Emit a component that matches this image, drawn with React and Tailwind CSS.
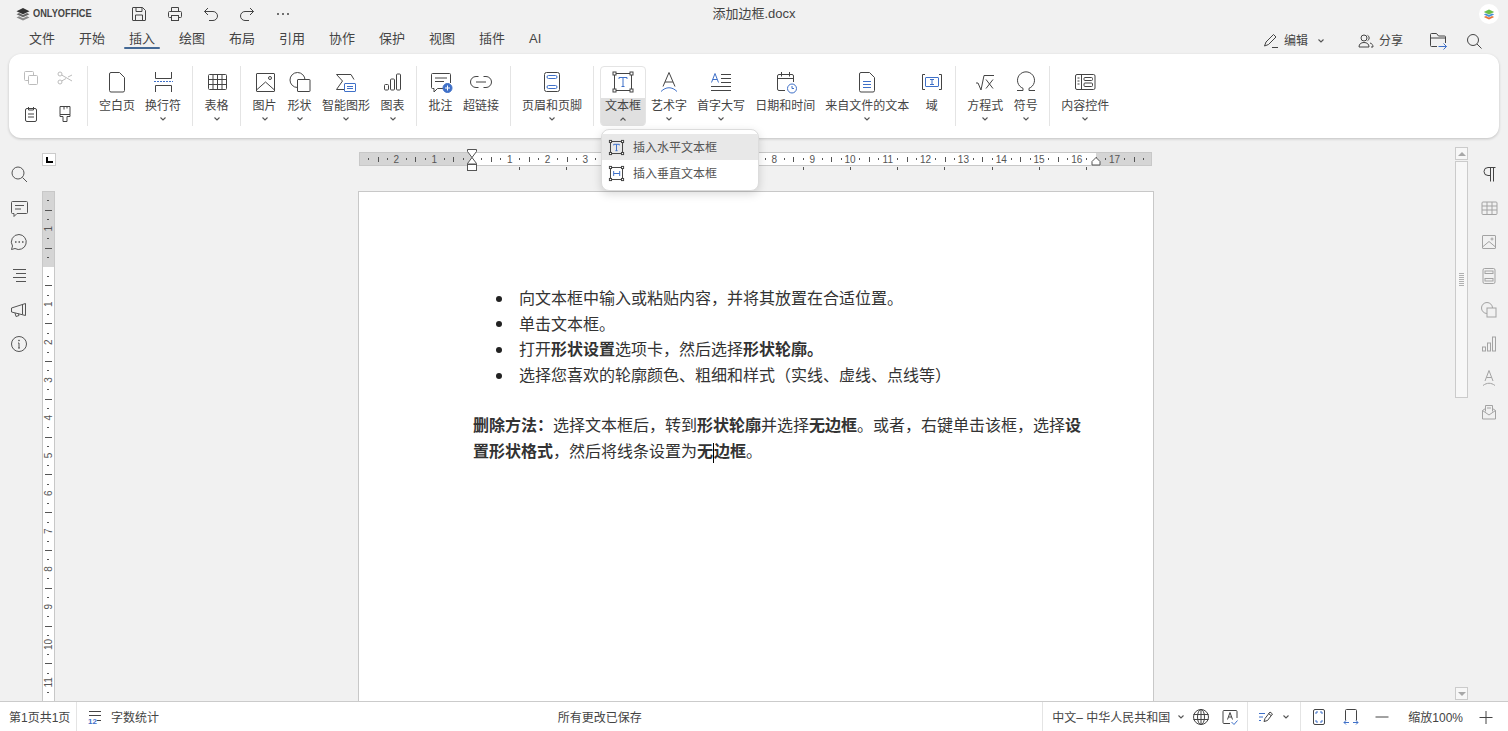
import React from 'react'

const BLUE = '#3f70c8'
const INK = '#444444'

const S = ({ w = 24, h = 24, c = INK, children }) => (
    <svg width={w} height={h} viewBox={`0 0 ${w} ${h}`} fill="none" stroke={c} strokeWidth="1" className="block shrink-0">
        {children}
    </svg>
)

const Chevron = ({ up }) => (
    <svg width="10" height="6" viewBox="0 0 10 6" fill="none" stroke="#555" strokeWidth="1.1" className="block shrink-0">
        <path d={up ? 'M2.5 4.5 5 2l2.5 2.5' : 'M2.5 1.5 5 4l2.5-2.5'} />
    </svg>
)

const TextBoxIcon = ({ vertical, size = 24 }) => (
    <svg width={size} height={size} viewBox="0 0 24 24" fill="none" stroke={INK} strokeWidth={size < 24 ? 1.4 : 1} className="block shrink-0">
        <rect x="3.5" y="3.5" width="17" height="17" />
        {[[2, 2], [19, 2], [2, 19], [19, 19]].map(([x, y]) => (
            <rect key={x + '-' + y} x={x} y={y} width="3" height="3" fill="#fff" />
        ))}
        {vertical ? (
            <path stroke={BLUE} d="M8 8.5v7M8 12h8.5M16.5 8.5v7" />
        ) : (
            <path stroke={BLUE} d="M8 9V7.5h8V9M12 7.5v9M10.5 16.5h3" />
        )}
    </svg>
)

const PageIcon = ({ lines }) => (
    <S>
        <path d="M6 2.5h8.5l5 5v13a1.5 1.5 0 0 1-1.5 1.5H6a1.5 1.5 0 0 1-1.5-1.5V4A1.5 1.5 0 0 1 6 2.5z" />
        {lines && <path stroke={BLUE} d="M8 11.5h8M8 14.5h8M8 17.5h8" />}
    </S>
)

const icons = {
    page: <PageIcon />,
    pageBreak: (
        <S>
            <path d="M4.5 2v6.5h16V2M4.5 22v-6.5h16V22" />
            <path stroke={BLUE} strokeDasharray="2 1" d="M3 11.5h19" />
        </S>
    ),
    table: (
        <S>
            <rect x="3.5" y="4.5" width="18" height="15" rx="1" />
            <path d="M3.5 9.5h18M3.5 14.5h18M8 4.5v15M12.5 4.5v15M17 4.5v15" />
        </S>
    ),
    image: (
        <S>
            <rect x="3.5" y="3.5" width="18" height="18" rx="0.5" />
            <path d="M3.5 20 12.5 12l9 8" />
            <circle cx="17" cy="8" r="1.5" />
        </S>
    ),
    shape: (
        <S>
            <circle cx="9.5" cy="10" r="7.5" />
            <rect x="9.5" y="9.5" width="12.5" height="12" rx="0.5" fill="#fff" />
        </S>
    ),
    smart: (
        <S>
            <path d="M20 9.5 17 4.5H2.5L8.5 11l-6 8.5H10" />
            <rect x="10.5" y="13.5" width="11" height="8" rx="0.5" stroke={BLUE} />
            <path stroke={BLUE} d="M13 16.5h6M13 18.5h6" />
        </S>
    ),
    chart: (
        <S>
            <rect x="3.5" y="14.5" width="4" height="5.5" rx="1" />
            <rect x="9.5" y="9" width="4" height="11" rx="1" />
            <rect x="15.5" y="4" width="4" height="16" rx="1" />
        </S>
    ),
    comment: (
        <S>
            <path d="M15 18.5H8.5L5 22v-3.5H3.5a1 1 0 0 1-1-1v-13a1 1 0 0 1 1-1h17a1 1 0 0 1 1 1V13" />
            <path d="M6 8h12M6 11.5h9" />
            <circle cx="18.5" cy="18" r="4.5" fill={BLUE} stroke={BLUE} />
            <path stroke="#fff" d="M16 18h5M18.5 15.5v5" />
        </S>
    ),
    link: (
        <S>
            <path d="M9.5 6.5H7a5.5 5.5 0 0 0 0 11h2.5M14.5 6.5H17a5.5 5.5 0 0 1 0 11h-2.5M7 12h10" />
        </S>
    ),
    headerFooter: (
        <S>
            <rect x="4.5" y="2.5" width="15" height="19" rx="2" />
            <rect x="7" y="5.5" width="10" height="3" rx="1.5" stroke={BLUE} />
            <rect x="7" y="15.5" width="10" height="3" rx="1.5" stroke={BLUE} />
        </S>
    ),
    textBox: <TextBoxIcon />,
    art: (
        <S>
            <path d="M6 16.5 12 2.5l6 14M8 12h8" />
            <path stroke={BLUE} d="M4 21.5c5-5 11-5 16 0" />
        </S>
    ),
    dropCap: (
        <S>
            <path stroke={BLUE} d="M2.5 12.5 6 3.5l3.5 9M3.8 9.5h4.4" />
            <path d="M12 4.5h10M12 8.5h10M12 12.5h10M2 16.5h20M2 20.5h20" />
        </S>
    ),
    date: (
        <S>
            <path d="M12 20.5H6A1.5 1.5 0 0 1 4.5 19V6A1.5 1.5 0 0 1 6 4.5h13A1.5 1.5 0 0 1 20.5 6v6M4.5 8.5h16M8.5 2v4.5M16.5 2v4.5" />
            <circle cx="19" cy="18.5" r="4.5" stroke={BLUE} fill="#fff" />
            <path stroke={BLUE} d="M19 16v2.5h2" />
        </S>
    ),
    fileText: <PageIcon lines />,
    field: (
        <S>
            <path d="M5 4.5H2.5v15H5M19 4.5h2.5v15H19" />
            <rect x="5.5" y="7.5" width="13" height="9" rx="0.5" stroke={BLUE} />
            <path stroke={BLUE} d="M10 9.5h4M12 9.5v5M10 14.5h4" />
        </S>
    ),
    equation: (
        <S>
            <path d="M3 13h2l3 7 3-14.5h10M13 9.5l7 9M20 9.5l-7 9" />
        </S>
    ),
    omega: (
        <S>
            <path d="M3 20.5h6v-2.200a8.500 8.500 0 1 1 6 0v2.200h6" />
        </S>
    ),
    control: (
        <S>
            <rect x="2.5" y="4.5" width="19.5" height="15" rx="1.5" />
            <path d="M8.5 4.5v15M4.5 8h2M4.5 11h2M4.5 14h2" />
            <rect x="11" y="7.5" width="8.5" height="3" rx="1" />
            <rect x="11" y="13" width="8.5" height="3.5" rx="1" />
        </S>
    ),
}

const Tool = ({ icon, label, arrow, open }) => (
    <div className={`flex h-[60px] min-w-[35px] flex-col items-center rounded-[4px] ${open ? 'border border-[#e4e4e4]' : ''}`}>
        <div className={`flex h-[32px] items-center justify-center ${open ? '-mt-px' : ''}`}>{icon}</div>
        <div className={`flex w-full flex-1 flex-col items-center px-[5px] pt-px ${open ? '-mx-px -mb-px w-[46px] rounded-b-[4px] bg-[#e0e0e0]' : ''}`}>
            <span className="whitespace-nowrap text-[12px] leading-[15px] text-[#444]">{label}</span>
            {arrow && <div className="mt-[2px]"><Chevron up={open} /></div>}
        </div>
    </div>
)

const Sep = () => <div className="mx-[6px] h-[60px] w-px shrink-0 bg-[#e4e4e4]" />

const Ribbon = () => (
    <div className="mx-[9px] flex h-[84px] shrink-0 items-start rounded-[12px] bg-white pl-[5px] pt-[12px] shadow-[0_1px_3px_rgba(0,0,0,0.2)]">
        <div className="-mr-px grid h-[60px] grid-cols-[34px_34px] grid-rows-[24px_24px] place-items-center gap-y-[12px]">
            <S w={16} h={16} c="#bcbcbc">
                <rect x="1.5" y="1.5" width="9" height="9" rx="1" />
                <rect x="5.5" y="5.5" width="9" height="9" rx="1" fill="#fff" />
            </S>
            <S w={16} h={16} c="#bcbcbc">
                <circle cx="3" cy="4" r="2" />
                <circle cx="3" cy="12" r="2" />
                <path d="M4.7 5 15 11M4.7 11 9 8.5M11 7l4-2" />
            </S>
            <S w={16} h={16}>
                <rect x="2.5" y="2.5" width="11" height="13" rx="1.5" />
                <path d="M5.5 1v3h5V1M5 8h6M5 11h6" />
            </S>
            <S w={16} h={16}>
                <path d="M3 .5h10v8H3zM3 8.5v2h3v5h4v-5h3v-2M7 .5v3M10 .5v2" />
            </S>
        </div>
        <Sep />
        <Tool icon={icons.page} label="空白页" />
        <Tool icon={icons.pageBreak} label="换行符" arrow />
        <Sep />
        <Tool icon={icons.table} label="表格" arrow />
        <Sep />
        <Tool icon={icons.image} label="图片" arrow />
        <Tool icon={icons.shape} label="形状" arrow />
        <Tool icon={icons.smart} label="智能图形" arrow />
        <Tool icon={icons.chart} label="图表" arrow />
        <Sep />
        <Tool icon={icons.comment} label="批注" />
        <Tool icon={icons.link} label="超链接" />
        <Sep />
        <Tool icon={icons.headerFooter} label="页眉和页脚" arrow />
        <Sep />
        <Tool icon={icons.textBox} label="文本框" arrow open />
        <Tool icon={icons.art} label="艺术字" arrow />
        <Tool icon={icons.dropCap} label="首字大写" arrow />
        <Tool icon={icons.date} label="日期和时间" />
        <Tool icon={icons.fileText} label="来自文件的文本" arrow />
        <Tool icon={icons.field} label="域" />
        <Sep />
        <Tool icon={icons.equation} label="方程式" arrow />
        <Tool icon={icons.omega} label="符号" arrow />
        <Sep />
        <Tool icon={icons.control} label="内容控件" arrow />
    </div>
)

const TitleBar = () => (
    <div className="grid h-[27px] shrink-0 grid-cols-[1fr_auto_1fr] items-center">
        <div className="flex items-center pl-[16px]">
            <S w={14} h={14} c="none">
                <path fill="#8a8a8a" d="M7 13.5.5 10.5 3 9.300 7 11.200l4-1.900 2.500 1.200z" />
                <path fill="#666" d="M7 10.300.5 7.300 3 6.100 7 8l4-1.900 2.500 1.200z" />
                <path fill="#333" d="M7 7.200.5 4.200 7 1l6.500 3.200z" />
            </S>
            <span className="ml-[3px] w-[60px] origin-left scale-x-[0.88] whitespace-nowrap text-[10.5px] font-bold leading-none text-[#444]">ONLYOFFICE</span>
            <div className="ml-[28px] flex">
                <div className="flex w-[36px] justify-center">
                    <S w={16} h={16}>
                        <path d="M2 1.500h9.500l3 3V14a.5.5 0 0 1-.5.5H2a.5.5 0 0 1-.5-.5V2a.5.5 0 0 1 .5-.5zM5 1.500v4h6v-4M4.500 14.500V9h7v5.500" />
                    </S>
                </div>
                <div className="flex w-[36px] justify-center">
                    <S w={16} h={16}>
                        <path d="M4.500 11.500h-2a1 1 0 0 1-1-1v-4a1 1 0 0 1 1-1h11a1 1 0 0 1 1 1v4a1 1 0 0 1-1 1h-2M4.500 5.500v-4h7v4" />
                        <rect x="4.5" y="9.5" width="7" height="5" />
                    </S>
                </div>
                <div className="flex w-[36px] justify-center">
                    <S w={16} h={16}>
                        <path d="M5 2 1.500 5.500 5 9M1.500 5.500H10a4.500 4.500 0 0 1 0 9H6" />
                    </S>
                </div>
                <div className="flex w-[36px] justify-center">
                    <S w={16} h={16}>
                        <path d="M11 2l3.500 3.500L11 9M14.500 5.500H6a4.500 4.500 0 0 0 0 9h4" />
                    </S>
                </div>
                <div className="flex w-[36px] items-center justify-center">
                    <S w={16} h={16} c="none">
                        <circle cx="3" cy="8" r="1" fill="#444" />
                        <circle cx="8" cy="8" r="1" fill="#444" />
                        <circle cx="13" cy="8" r="1" fill="#444" />
                    </S>
                </div>
            </div>
        </div>
        <span className="text-[13px] leading-none text-[#444]">添加边框.docx</span>
        <div className="flex justify-end pr-[9px]">
            <div className="flex h-[20px] w-[20px] items-center justify-center rounded-full bg-white">
                <svg width="12" height="12" viewBox="0 0 12 12" className="block">
                    <path fill="#e8743b" d="M6 11.5.8 9 3 8l3 1.4L9 8l2.200 1z" />
                    <path fill="#4a90d9" d="M6 9 .8 6.500 3 5.500l3 1.400 3-1.400 2.200 1z" />
                    <path fill="#6cbf4b" d="M6 6.500.8 4 6 1.500 11.200 4z" />
                </svg>
            </div>
        </div>
    </div>
)

const tabs = ['文件', '开始', '插入', '绘图', '布局', '引用', '协作', '保护', '视图', '插件', 'AI']

const TabBar = () => (
    <div className="flex h-[27px] shrink-0 items-center pl-[17px] pr-[26px]">
        {tabs.map((t) => (
            <div key={t} className="relative flex h-[27px] w-[50px] items-center pb-[4px] pl-[12px]">
                <span className="text-[13px] leading-none text-[#444]">{t}</span>
                {t === '插入' && <div className="absolute bottom-[5px] left-[7px] h-[2px] w-[36px] rounded-full bg-[#446995]" />}
            </div>
        ))}
        <div className="ml-auto flex items-center text-[12px] text-[#444]">
            <S w={16} h={16}>
                <path d="M1.500 13 3 9l7.500-7.500 2.500 2.500L5.500 11.500zM9 14.500h6" />
            </S>
            <span className="ml-[5px] pt-px">编辑</span>
            <div className="ml-[8px]"><Chevron /></div>
            <div className="ml-[32px]">
                <S w={16} h={16}>
                    <circle cx="6" cy="5" r="3" />
                    <path d="M1 14c0-3 2-4.500 5-4.500s5 1.500 5 4.500zM9.500 2.300a3 3 0 0 1 0 5.400M12 10c2 .5 3 2 3 4h-2" />
                </S>
            </div>
            <span className="ml-[5px] pt-px">分享</span>
            <div className="ml-[26px]">
                <S w={18} h={18}>
                    <path d="M8 14.500H2.500a1 1 0 0 1-1-1v-11a1 1 0 0 1 1-1h5l2 2.500h6a1 1 0 0 1 1 1V11M1.500 6h15" />
                    <path stroke={BLUE} d="M9.500 14.500h8M14.500 11.500l3 3-3 3" />
                </S>
            </div>
            <div className="ml-[19px]">
                <S w={16} h={16}>
                    <circle cx="7" cy="7" r="5.5" />
                    <path d="m11 11 4.500 4.500" />
                </S>
            </div>
        </div>
    </div>
)

const RULER_UNIT = 37.8

const HorizontalRuler = () => {
    const marks = []
    for (let i = -11; i < 72; i++) marks.push(i)
    return (
        <svg width="796" height="24" viewBox="0 0 796 24" className="block shrink-0 overflow-visible">
            <rect x="1.5" y="4.5" width="792" height="13" fill="#fff" stroke="#c8c8c8" />
            <rect x="2" y="5" width="112" height="12" fill="#d5d5d5" />
            <rect x="738" y="5" width="55" height="12" fill="#d5d5d5" />
            {marks.map((i) => {
                const x = 114 + (i * RULER_UNIT) / 4
                if (i === 0) return null
                if (i % 4 === 0) {
                    return (
                        <text key={i} x={x} y="14.5" textAnchor="middle" fontSize="10" fill="#555">
                            {Math.abs(i / 4)}
                        </text>
                    )
                }
                const tall = Math.abs(i % 4) === 2
                return <rect key={i} x={Math.round(x)} y={tall ? 9 : 10} width="1" height={tall ? 5 : 2} fill="#555" />
            })}
            {Array.from({ length: 13 }, (_, k) => (
                <rect key={k} x={Math.round(114 + 47.24 * (k + 1))} y="19" width="1" height="3" fill="#555" />
            ))}
            <path d="M109.500 1.500h9v2l-4.500 6-4.500-6zM114 9.500l4.500 6v.5h-9v-.5z" fill="#fff" stroke="#555" />
            <rect x="109.5" y="16.5" width="9" height="6" fill="#fff" stroke="#555" />
            <path d="M738 9.500l4 4v3.500h-8v-3.500z" fill="#fff" stroke="#555" />
        </svg>
    )
}

const VerticalRuler = () => {
    const marks = []
    for (let i = -7; i < 46; i++) marks.push(i)
    return (
        <svg width="13" height="510" viewBox="0 0 13 510" className="block shrink-0">
            <rect x="0.5" y="0.5" width="12" height="520" fill="#fff" stroke="#c8c8c8" />
            <rect x="1" y="1" width="11" height="75" fill="#d5d5d5" />
            {marks.map((i) => {
                const y = 75.5 + (i * RULER_UNIT) / 4
                if (i === 0) return null
                if (i % 4 === 0) {
                    return (
                        <text key={i} x="6.5" y={y} textAnchor="middle" dominantBaseline="central" fontSize="10" fill="#555" transform={`rotate(-90 6.5 ${y})`}>
                            {Math.abs(i / 4)}
                        </text>
                    )
                }
                const tall = Math.abs(i % 4) === 2
                return <rect key={i} x={tall ? 3 : 5} y={Math.round(y)} width={tall ? 7 : 2} height="1" fill="#555" />
            })}
        </svg>
    )
}

const Bullet = ({ children }) => (
    <li className="flex items-center">
        <span className="mr-[17px] h-[6px] w-[6px] shrink-0 rounded-full bg-[#222]" />
        <span>{children}</span>
    </li>
)

const Page = () => (
    <div className="mt-[19px] h-[1000px] w-[796px] shrink-0 border border-[#c8c8c8] bg-white pl-[114px] pt-[94px] text-[16px] leading-[25.6px] text-[#333]">
        <ul className="pl-[23px]">
            <Bullet>向文本框中输入或粘贴内容，并将其放置在合适位置。</Bullet>
            <Bullet>单击文本框。</Bullet>
            <Bullet>打开<b>形状设置</b>选项卡，然后选择<b>形状轮廓。</b></Bullet>
            <Bullet>选择您喜欢的轮廓颜色、粗细和样式（实线、虚线、点线等）</Bullet>
        </ul>
        <p className="mt-[25px] w-[610px]">
            <b>删除方法：</b>选择文本框后，转到<b>形状轮廓</b>并选择<b>无边框</b>。或者，右键单击该框，选择<b>设置形状格式</b>，然后将线条设置为<b>无<span className="-my-1 inline-block h-[20px] w-0 border-l border-black align-middle" />边框</b>。
        </p>
    </div>
)

const LeftBar = () => (
    <div className="flex w-[42px] shrink-0 flex-col pl-[9px] pt-[19px]">
        {[
            <><circle cx="9" cy="9" r="6" /><path d="m13.500 13.500 4.500 4.500" /></>,
            <><path d="M3.500 3.500h14a1 1 0 0 1 1 1v10a1 1 0 0 1-1 1H8l-3 3v-3H3.500a1 1 0 0 1-1-1v-10a1 1 0 0 1 1-1z" /><path d="M6 7.500h9M6 11h6" /></>,
            <><path d="M10 2.500a7.500 7.500 0 1 1-4 14l-3.500 1 1-3.500a7.500 7.500 0 0 1 6.500-11.500z" /><path strokeDasharray="1.5 2" strokeWidth="1.5" d="M6 10h9" /></>,
            <path d="M4 3.500h13M7 7.500h10M4 11.500h13M7 15.500h10" />,
            <path d="M2.500 8 16.500 3.500v12L2.500 12zM6 13l1 3.500 3-1-.5-1.800M13.500 4.500v10" />,
            <><circle cx="10" cy="10" r="7.5" /><path d="M10 9v5M9 9h1M9 14h2" /><circle cx="10" cy="6.5" r=".5" /></>,
        ].map((icon, i) => (
            <div key={i} className="flex h-[34px] items-center justify-start">
                <S w={20} h={20} c="#555">{icon}</S>
            </div>
        ))}
    </div>
)

const RightBar = () => (
    <div className="flex w-[40px] shrink-0 flex-col items-center pl-[2px] pt-[19px]">
        {[
            <path stroke="#444" d="M16.500 3.500H9a4 4 0 0 0 0 8h2M11.500 3.500v14M14.500 3.500v14" />,
            <><rect x="3" y="4" width="15" height="12.5" rx="1" /><path d="M3 8h15M3 12h15M8 4v12.500M13 4v12.500" /></>,
            <><rect x="3.5" y="3.5" width="13" height="13" rx=".5" /><path d="M3.500 15 10 9.500l6.500 5.500" /><circle cx="13" cy="7" r="1" /></>,
            <><rect x="4" y="2.5" width="12" height="15" rx="1.5" /><rect x="6" y="5" width="8" height="2.5" /><rect x="6" y="12.5" width="8" height="2.5" /></>,
            <><circle cx="8" cy="8" r="5.5" /><rect x="8" y="8" width="9" height="9" fill="#f1f1f1" /></>,
            <><rect x="3.5" y="13" width="3" height="4" /><rect x="8.5" y="9" width="3" height="8" /><rect x="13.5" y="3" width="3" height="14" /></>,
            <path d="M6 13 10 2.500 14 13M7.500 9.500h5M4 17.500c4-3 8-3 12 0" />,
            <><path d="M3.500 8.500v8.500h13V8.500l-3-2M3.500 8.500l3-2M3.500 8.500 10 13l6.500-4.500" /><path d="M6.500 9.500V3.500h7v6M8 6h4" /></>,
        ].map((icon, i) => (
            <div key={i} className="flex h-[34px] items-center justify-center">
                <S w={20} h={20} c="#a3a3a3">{icon}</S>
            </div>
        ))}
    </div>
)

const ScrollBar = () => (
    <div className="flex w-[13px] shrink-0 flex-col pb-[1px] pt-[9px]">
        <div className="flex h-[13px] items-center justify-center border border-[#cbcbcb] bg-[#f7f7f7]">
            <div className="h-0 w-0 border-x-[4px] border-b-[4px] border-x-transparent border-b-[#a8a8a8]" />
        </div>
        <div className="mt-[1px] flex h-[237px] items-center justify-center border border-[#cbcbcb] bg-[#f7f7f7]">
            <div className="h-[13px] w-[5px] bg-[repeating-linear-gradient(#b0b0b0_0_1px,transparent_1px_2px)]" />
        </div>
        <div className="mt-auto flex h-[13px] items-center justify-center border border-[#cbcbcb] bg-[#f7f7f7]">
            <div className="h-0 w-0 border-x-[4px] border-t-[4px] border-x-transparent border-t-[#a8a8a8]" />
        </div>
    </div>
)

const Workspace = () => (
    <div className="flex min-h-0 flex-1 overflow-hidden">
        <LeftBar />
        <div className="flex w-[13px] shrink-0 flex-col pt-[15px]">
            <div className="flex h-[14px] w-[14px] items-center justify-center border border-[#cbcbcb] bg-white">
                <div className="h-[6px] w-[7px] border-b-2 border-l-2 border-black" />
            </div>
            <div className="mt-[25px]"><VerticalRuler /></div>
        </div>
        <div className="flex min-w-0 flex-1 flex-col items-center pl-[2px] pt-[10px]">
            <HorizontalRuler />
            <Page />
        </div>
        <ScrollBar />
        <RightBar />
    </div>
)

const StatusBar = () => (
    <div className="flex h-[30px] shrink-0 items-center border-t border-[#cbcbcb] bg-white text-[12px] text-[#444]">
        <div className="flex h-full w-[77px] shrink-0 items-center border-r border-[#e4e4e4] pl-[9px] pt-[2px]">第1页共1页</div>
        <div className="flex h-full w-[80px] shrink-0 items-center pl-[11px]">
            <svg width="14" height="16" viewBox="0 0 14 16" fill="none" stroke="#444" className="block shrink-0">
                <path d="M1 2.500h12M1 6.500h12M9 11.500h4" />
                <text x="0" y="15" fontSize="8" fontWeight="700" fill={BLUE} stroke="none">12</text>
            </svg>
            <span className="ml-[9px] whitespace-nowrap pt-[2px]">字数统计</span>
        </div>
        <div className="flex-1 pt-[2px] text-center">所有更改已保存</div>
        <div className="flex h-full items-center border-l border-[#e4e4e4] pl-[9px]">
            <span className="w-[118px] whitespace-nowrap pt-[2px]">中文– 中华人民共和国</span>
            <div className="ml-[6px]"><Chevron /></div>
            <div className="ml-[7px]">
                <S w={16} h={16}>
                    <circle cx="8" cy="8" r="7.5" />
                    <ellipse cx="8" cy="8" rx="3.5" ry="7.5" />
                    <path d="M.5 5.500h15M.5 10.500h15M8 .5v15" />
                </S>
            </div>
            <div className="ml-[13px]">
                <S w={16} h={16}>
                    <path d="M8 14.500H2a1 1 0 0 1-1-1v-11a1 1 0 0 1 1-1h12a1 1 0 0 1 1 1V9M5.500 10.500l2.500-7 2.500 7M6.500 8h3" />
                    <path stroke={BLUE} d="m9.500 13 2.500 2.500 3.500-4" />
                </S>
            </div>
            <div className="ml-[9px] h-full w-px bg-[#e4e4e4]" />
            <div className="ml-[10px]">
                <S w={16} h={16}>
                    <path stroke={BLUE} d="M1 4.500h6M1 8h4M1 11.500h2" />
                    <path d="M6 12.500 7 9.500l5-6.500 2.500 2L9.500 11.500zM10.500 4.500l2.500 2" />
                </S>
            </div>
            <div className="ml-[7px]"><Chevron /></div>
            <div className="ml-[9px] h-full w-px bg-[#e4e4e4]" />
            <div className="ml-[10px]">
                <S w={16} h={16}>
                    <rect x="2.5" y=".5" width="11" height="15" rx="1.5" />
                    <path stroke={BLUE} d="M5 5V3h2M9 3h2v2M5 11v2h2M9 13h2v-2" />
                </S>
            </div>
            <div className="ml-[16px]">
                <S w={16} h={16}>
                    <path d="M2.500 11.500v-10a1 1 0 0 1 1-1h9a1 1 0 0 1 1 1v10" />
                    <path stroke={BLUE} d="M1 13.500h5M3 11.500l-2 2 2 2M10 13.500h5M13 11.500l2 2-2 2" />
                </S>
            </div>
            <div className="ml-[15px]">
                <S w={16} h={16}><path d="M1.500 8h13" /></S>
            </div>
            <span className="ml-[18px] whitespace-nowrap pt-[2px]">缩放100%</span>
            <div className="ml-[15px] mr-[14px]">
                <S w={16} h={16}><path d="M1.500 8.500h13M8 2v13" /></S>
            </div>
        </div>
    </div>
)

const Dropdown = () => (
    <div className="absolute left-[601px] top-[129px] w-[158px] rounded-[8px] border border-[#dcdcdc] bg-white py-[4px] shadow-[0_3px_10px_rgba(0,0,0,0.15)]">
        <div className="flex h-[26px] items-center bg-[#e8e8e8] pl-[6px] text-[12px] text-[#555]">
            <TextBoxIcon size={17} />
            <span className="ml-[8px] pt-[2px]">插入水平文本框</span>
        </div>
        <div className="flex h-[26px] items-center pl-[6px] text-[12px] text-[#555]">
            <TextBoxIcon size={17} vertical />
            <span className="ml-[8px] pt-[2px]">插入垂直文本框</span>
        </div>
    </div>
)

export default function App() {
    return (
        <div className="relative flex h-[731px] w-full flex-col overflow-hidden bg-[#f1f1f1] font-['Liberation_Sans','Noto_Sans_CJK_SC',sans-serif]">
            <TitleBar />
            <TabBar />
            <Ribbon />
            <Workspace />
            <StatusBar />
            <Dropdown />
        </div>
    )
}
